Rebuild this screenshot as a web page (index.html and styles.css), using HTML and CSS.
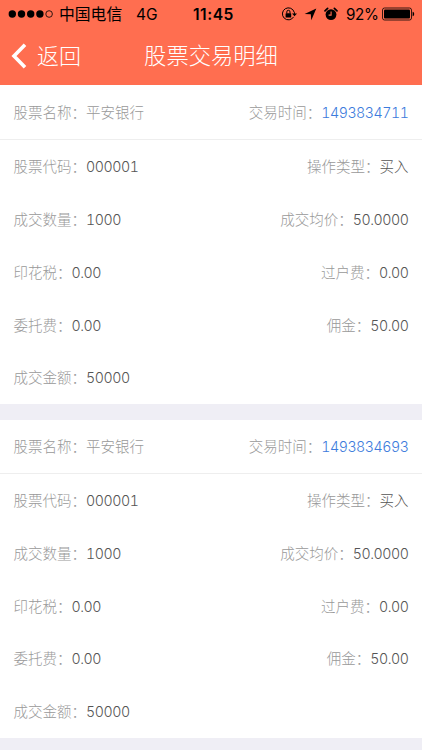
FILE: index.html
```
<!DOCTYPE html>
<html lang="zh-CN">
<head>
<meta charset="utf-8">
<title>股票交易明细</title>
<link rel="stylesheet" href="styles.css">
</head>
<body>
<header class="header">
  <div class="status">
    <svg class="signal" width="46" height="10" viewBox="0 0 46 10"><circle cx="4.3" cy="5" r="3.7"/><circle cx="13.5" cy="5" r="3.7"/><circle cx="22.7" cy="5" r="3.7"/><circle cx="31.9" cy="5" r="3.7"/><circle cx="41.1" cy="5" r="3.3" fill="none" stroke="#000" stroke-width=".8"/></svg>
    <span class="carrier">中国电信</span>
    <span class="network">4G</span>
    <span class="clock">11:45</span>
    <svg class="lock" width="17" height="14" viewBox="0 0 17 14"><path d="M13.2 5.2A6 6 0 1 0 12.6 9.9M13.4 5.2v2.1" fill="none" stroke="#000"/><path d="M11 6.6h5l-2.5 2.7z"/><rect x="4.6" y="6.2" width="5.6" height="4.2" rx=".5"/><path d="M5.8 6.4V4.9a1.6 1.6 0 0 1 3.2 0v1.5" fill="none" stroke="#000"/></svg>
    <svg class="location" width="13" height="13" viewBox="0 0 13 13"><path d="M12.3.6 7.3 12.2 6.8 6.3.6 6z"/></svg>
    <svg class="alarm" width="14" height="14" viewBox="0 0 14 14"><circle cx="7" cy="7.6" r="5.4"/><path d="M1 3.8 3.6 1.4M10.4 1.4 13 3.8" stroke="#000" stroke-width="1.7" stroke-linecap="round"/><path d="M7.1 4.5v3.6H4.6" fill="none" stroke="#ff6e50" stroke-width="1.1"/></svg>
    <span class="percent">92%</span>
    <svg class="battery" width="34" height="14" viewBox="0 0 34 14"><rect x=".5" y="1" width="29" height="12" rx="2" fill="none" stroke="#000" stroke-width=".8"/><rect x="2" y="2.5" width="26" height="9" rx="1"/><path d="M30.6 4.8c2.1.3 2.1 4.1 0 4.4z"/></svg>
  </div>
  <nav class="nav">
    <a class="back"><svg width="16" height="26" viewBox="0 0 16 26"><path d="M14 1.8 3 13l11 11.2" fill="none" stroke="#fff" stroke-width="3.6"/></svg><span>返回</span></a>
    <h1>股票交易明细</h1>
  </nav>
</header>
<main>
  <section class="card">
    <div class="row title"><p>股票名称：<b>平安银行</b></p><p>交易时间：<span class="time">1493834711</span></p></div>
    <div class="row"><p>股票代码：<span>000001</span></p><p>操作类型：<em>买入</em></p></div>
    <div class="row"><p>成交数量：<span>1000</span></p><p>成交均价：<span>50.0000</span></p></div>
    <div class="row"><p>印花税：<span>0.00</span></p><p>过户费：<span>0.00</span></p></div>
    <div class="row"><p>委托费：<span>0.00</span></p><p>佣金：<span>50.00</span></p></div>
    <div class="row"><p>成交金额：<span>50000</span></p></div>
  </section>
  <section class="card">
    <div class="row title"><p>股票名称：<b>平安银行</b></p><p>交易时间：<span class="time">1493834693</span></p></div>
    <div class="row"><p>股票代码：<span>000001</span></p><p>操作类型：<em>买入</em></p></div>
    <div class="row"><p>成交数量：<span>1000</span></p><p>成交均价：<span>50.0000</span></p></div>
    <div class="row"><p>印花税：<span>0.00</span></p><p>过户费：<span>0.00</span></p></div>
    <div class="row"><p>委托费：<span>0.00</span></p><p>佣金：<span>50.00</span></p></div>
    <div class="row"><p>成交金额：<span>50000</span></p></div>
  </section>
</main>
</body>
</html>
```
FILE: styles.css
```
* { box-sizing: border-box; }
body {
  margin: 0;
  height: 750px;
  overflow: hidden;
  background: #efeef5;
  font-family: Inter, "Noto Sans CJK SC", sans-serif;
  font-weight: 300;
}
p, h1 { margin: 0; }
svg { display: block; flex: none; }
.header { height: 84.5px; background: #ff6e50; }
.status {
  display: flex;
  align-items: center;
  height: 28px;
  padding-left: 8px;
  color: #000;
  font-size: 16px;
  line-height: 28px;
  white-space: nowrap;
}
.carrier { width: 64px; margin-left: 5px; padding-top: 1px; font-weight: 400; font-size: 15.8px; }
.network { width: 56px; margin-left: 13px; padding-top: 1px; font-weight: 400; font-size: 15.5px; }
.clock { width: 44px; margin-left: 1px; padding-top: 1px; font-weight: 600; font-size: 15.6px; letter-spacing: .5px; }
.lock { margin-left: 44px; }
.location { margin-left: 6px; }
.alarm { margin-left: 7px; }
.percent { width: 33px; margin-left: 8px; padding-top: 1px; font-weight: 400; font-size: 15.2px; letter-spacing: -.3px; }
.battery { margin-left: 3px; }
.nav {
  display: grid;
  grid-template-columns: 1fr auto 1fr;
  align-items: center;
  height: 56px;
  padding: 0 11px;
  color: #fff;
}
.back { display: flex; align-items: center; gap: 10px; font-size: 22px; line-height: 32px; }
.nav h1 { font-size: 22.3px; line-height: 32px; font-weight: 300; }
.card { height: 318px; margin-bottom: 15.8px; background: #fff; }
.card:first-child { height: 319.5px; }
.row {
  display: flex;
  justify-content: space-between;
  align-items: center;
  height: 52.75px;
  padding: 2px 13.5px 0;
  color: #999;
  font-size: 14.5px;
  line-height: 24px;
  white-space: nowrap;
}
.title { height: 54px; border-bottom: 1px solid #eee; }
.card:first-child .title { height: 55.5px; padding-top: 3px; }
.row b { font-weight: 300; }
.row em { font-style: normal; color: #555; }
.row span { color: #555; font-size: 14.2px; font-variant-numeric: tabular-nums; letter-spacing: -.45px; }
.row .time { color: #3c7bdc; }
```
